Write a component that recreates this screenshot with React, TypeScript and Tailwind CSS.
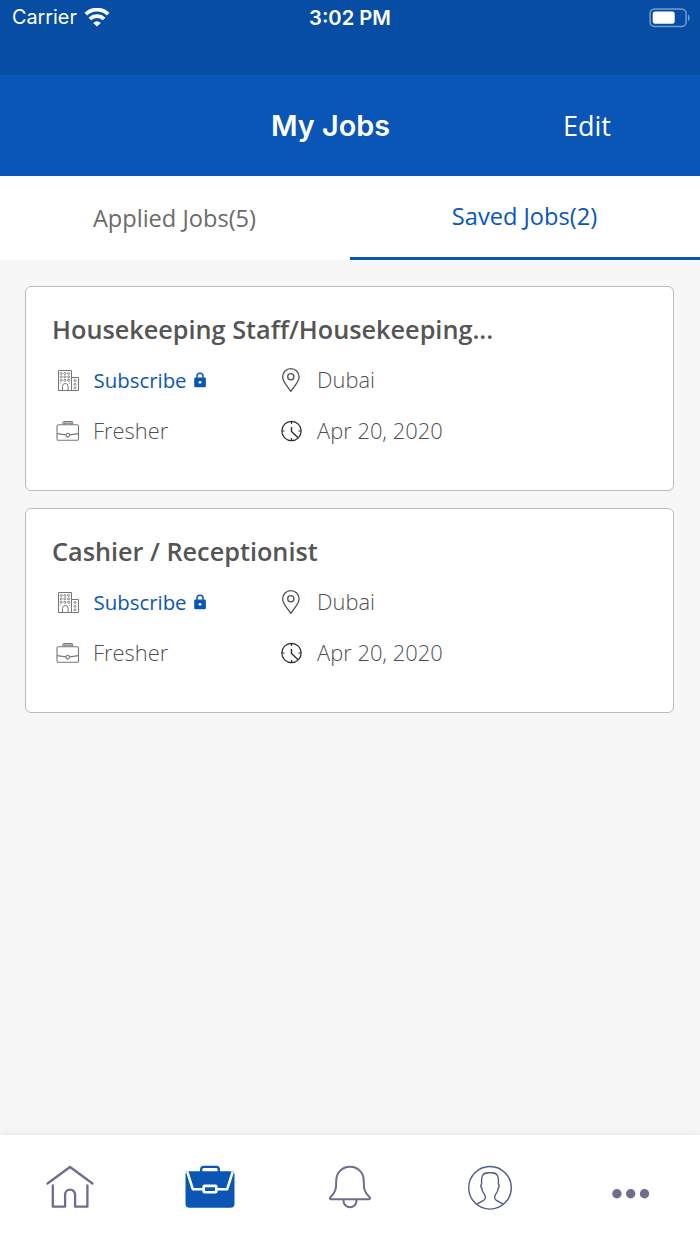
import React from "react";

interface Job {
  title: string;
  location: string;
  experience: string;
  date: string;
}

const jobs: Job[] = [
  {
    title: "Housekeeping Staff/Housekeeping...",
    location: "Dubai",
    experience: "Fresher",
    date: "Apr 20, 2020",
  },
  {
    title: "Cashier / Receptionist",
    location: "Dubai",
    experience: "Fresher",
    date: "Apr 20, 2020",
  },
];

function WifiIcon() {
  return (
    <svg width="26" height="20" viewBox="0 0 26 20" fill="none" stroke="#fff" strokeWidth="3.8">
      <path d="M1.8 6.2a16.2 16.2 0 0 1 22.4 0" />
      <path d="M5.9 11a10.2 10.2 0 0 1 14.2 0" />
      <path d="M13 18.600l-3.800-3.700a5.400 5.400 0 0 1 7.600 0z" fill="#fff" stroke="none" />
    </svg>
  );
}

function BatteryIcon() {
  return (
    <svg width="42" height="20" viewBox="0 0 42 20" fill="none">
      <rect x="1.1" y="0.900" width="36" height="17.600" rx="4.600" stroke="#fff" strokeOpacity="0.45" strokeWidth="1.5" />
      <rect x="3.700" y="3.600" width="22" height="12.200" rx="2.400" fill="#fff" />
      <path d="M39.100 6.600c1.900.9 1.900 5.600 0 6.500z" fill="#fff" fillOpacity="0.5" />
    </svg>
  );
}

function BuildingIcon() {
  return (
    <svg width="32" height="32" viewBox="0 0 32 32" fill="none" stroke="#777" strokeWidth="1">
      <path d="M6.5 26.5v-20h13v20M19.5 13.5h7v13H6" />
      <path d="M10.5 26.5v-4.2a2.8 2.8 0 0 1 5.6 0v4.2" />
      <g strokeWidth="0.9">
        {[8.6, 12, 15.4].map((y) =>
          [8.2, 11.9, 15.6].map((x) => <rect key={`${x}-${y}`} x={x} y={y} width="2" height="1.7" rx="0.6" />)
        )}
        {[15.6, 19.4, 23].map((y) => (
          <rect key={y} x="22" y={y} width="2" height="1.8" rx="0.6" />
        ))}
        <path d="M8.2 18.6v1M17.6 18.6v1" />
      </g>
    </svg>
  );
}

function BriefcaseIcon() {
  return (
    <svg width="32" height="32" viewBox="0 0 32 32" fill="none" stroke="#777" strokeWidth="1.1">
      <rect x="5" y="9.7" width="21.5" height="15.6" rx="1.4" />
      <path d="M10.8 9.6V8.2a1.6 1.6 0 0 1 1.6-1.6h6.8a1.6 1.6 0 0 1 1.6 1.6v1.4M12.4 9.6V8.2h6.8v1.4" />
      <path d="M5 18.6l9 1.300M26.500 18.600l-9 1.300" />
      <path d="M15.750 18.200c1 0 1.700.6 1.700 1.500 0 1.200-.8 2.200-1.700 2.600-.9-.4-1.700-1.400-1.700-2.600 0-.9.700-1.500 1.700-1.500z" />
    </svg>
  );
}

function PinIcon() {
  return (
    <svg width="32" height="32" viewBox="0 0 32 32" fill="none" stroke="#505050" strokeWidth="1.3">
      <path d="M14.8 27.4C11.700 22.300 6.600 18.300 6.600 12.800a8.250 8.250 0 0 1 16.500 0c0 5.500-5.200 9.500-8.300 14.600z" strokeLinejoin="round" />
      <circle cx="14.8" cy="12.7" r="3.1" />
    </svg>
  );
}

function ClockIcon() {
  return (
    <svg width="32" height="32" viewBox="0 0 32 32" fill="none" stroke="#2b2b2b" strokeWidth="1.2">
      <circle cx="15.5" cy="16" r="9.7" />
      <path d="M15.5 6.500v2.600M15.500 23v2.500M6 16h2.500M22.500 16H25" />
      <path d="M15.5 12v4.500l6.300 5.900" strokeWidth="1.4" />
    </svg>
  );
}

function LockIcon() {
  return (
    <svg width="14" height="17" viewBox="0 0 14 17" fill="none">
      <path d="M4 7V4.200a3 3 0 0 1 6 0V7" stroke="#0b56b5" strokeWidth="1.500" />
      <rect x="1.200" y="5.400" width="11.700" height="9.900" rx="1.300" fill="#0b56b5" />
      <circle cx="7" cy="10.300" r="1.400" fill="#fff" />
    </svg>
  );
}

function HomeIcon() {
  return (
    <svg width="52" height="52" viewBox="0 0 52 52" fill="none" stroke="#6e6c8f" strokeWidth="2.3" strokeLinecap="round" strokeLinejoin="round">
      <path d="M3.500 21.500L26 5l22.500 16.500" />
      <path d="M8.800 23.500v21.200h12.300V32.600a5 5 0 0 1 10 0v12.100h12.300V23.500" />
    </svg>
  );
}

function JobsIcon() {
  return (
    <svg width="52" height="52" viewBox="0 0 52 52" fill="none">
      <path d="M17.200 10.500V7.500c0-1.700.9-2.600 2.600-2.600h12.400c1.700 0 2.600.9 2.600 2.600v3" stroke="#0b56b5" strokeWidth="2.300" />
      <path d="M2.500 9.200h47l1 3v29.600a4 4 0 0 1-4 4h-41a4 4 0 0 1-4-4V12.200z" fill="#0b56b5" />
      <path d="M3.200 9.500l5.600 17.700h34.400l5.600-17.700" stroke="#fff" strokeWidth="2.500" strokeLinejoin="round" />
      <rect x="19.700" y="23.900" width="12.600" height="6.400" rx="0.800" fill="#0b56b5" stroke="#fff" strokeWidth="2.600" />
    </svg>
  );
}

function BellIcon() {
  return (
    <svg width="52" height="52" viewBox="0 0 52 52" fill="none" stroke="#6e6c8f" strokeWidth="2" strokeLinejoin="round">
      <path d="M26 4.700c-8.200 0-13.800 6.300-13.800 14.300 0 6.900.2 10.300-5.800 16.200-1 1-.7 2.100.5 2.100h38.200c1.200 0 1.500-1.100.5-2.100-6-5.900-5.800-9.300-5.800-16.200C39.800 11 34.200 4.700 26 4.700z" />
      <path d="M19.500 37.500v1.200a6.500 6.500 0 0 0 13 0v-1.200" />
    </svg>
  );
}

function ProfileIcon() {
  return (
    <svg width="52" height="52" viewBox="0 0 52 52" fill="none" stroke="#515e87" strokeWidth="1.4" strokeLinejoin="round">
      <circle cx="26" cy="25.800" r="21.300" />
      <path d="M12.800 42.200l6.800-3.800c1.500-.9 1.800-1.700 1.800-3.200 0-1.800-.6-2.400-1.800-4-1.200-1.600-1.700-3.300-1.700-4.700-1-1.300-1.200-3.500-.3-4.700-.4-7.700.9-10.800 6.400-11h4c5.500.2 6.800 3.300 6.400 11 .9 1.200.7 3.400-.3 4.700 0 1.400-.5 3.100-1.700 4.700-1.200 1.600-1.800 2.200-1.800 4 0 1.500.3 2.300 1.800 3.200l6.800 3.800" />
    </svg>
  );
}

function MoreIcon() {
  return (
    <svg width="52" height="52" viewBox="0 0 52 52" fill="#6e6c8f">
      <circle cx="12.900" cy="31.700" r="4.700" />
      <circle cx="26.700" cy="31.700" r="4.700" />
      <circle cx="40.500" cy="31.700" r="4.700" />
    </svg>
  );
}

function JobCard({ job }: { job: Job }) {
  return (
    <div className="h-[205px] rounded-md border border-[#bcbcbc] bg-white pt-6 pl-[26px]">
      <h2 className="h-9 text-[25.25px] leading-9 font-semibold whitespace-nowrap text-[#555]">{job.title}</h2>
      <div className="mt-[17px] grid grid-cols-[224px_1fr] gap-y-[19px] text-[21.9px] leading-[31px] font-light text-[#505050]">
        <div className="flex h-8">
          <BuildingIcon />
          <span className="ml-[9.5px] text-[20.4px] leading-[33px] font-normal text-[#0b56b5]">Subscribe</span>
          <span className="mt-2 ml-[6.5px]">
            <LockIcon />
          </span>
        </div>
        <div className="flex h-8">
          <PinIcon />
          <span className="ml-[9px]">{job.location}</span>
        </div>
        <div className="flex h-8">
          <BriefcaseIcon />
          <span className="ml-[9px]">{job.experience}</span>
        </div>
        <div className="flex h-8">
          <ClockIcon />
          <span className="ml-[9px]">{job.date}</span>
        </div>
      </div>
    </div>
  );
}

function App() {
  return (
    <div className="flex h-[1244px] w-[700px] flex-col overflow-hidden bg-[#f7f7f7] font-['Open_Sans',sans-serif]">
      <div className="h-[75px] bg-[#074da3] px-3 font-['Inter',sans-serif] text-white">
        <div className="grid h-9 grid-cols-3 items-center">
          <div className="flex items-center gap-[7px] text-[19.8px]">
            <span>Carrier</span>
            <WifiIcon />
          </div>
          <span className="text-center text-[20.2px] font-semibold">3:02 PM</span>
          <div className="-mr-[3px] flex justify-end">
            <BatteryIcon />
          </div>
        </div>
      </div>

      <header className="flex h-[101px] items-center bg-[#0a56b6] text-white">
        <h1 className="ml-[271px] w-[292px] font-['Inter',sans-serif] text-[28.8px] font-semibold">My Jobs</h1>
        <button className="pt-0.5 text-[27px]">Edit</button>
      </header>

      <div className="grid h-[84px] grid-cols-2 bg-white text-[23.6px]">
        <button className="pt-px pr-px text-[#6b6b6b]">Applied Jobs(5)</button>
        <button className="border-b-[3px] border-[#0a56b6] pr-px text-[#0a56b6]">Saved Jobs(2)</button>
      </div>

      <main className="flex flex-1 flex-col gap-[17px] pt-[26px] pr-[26px] pl-[25px]">
        {jobs.map((job) => (
          <JobCard key={job.title} job={job} />
        ))}
      </main>

      <nav className="grid h-[109px] grid-cols-5 justify-items-center bg-white pt-[27px] shadow-[0_-1px_8px_rgba(0,0,0,0.08)]">
        <HomeIcon />
        <JobsIcon />
        <BellIcon />
        <ProfileIcon />
        <MoreIcon />
      </nav>
    </div>
  );
}

export default App;
